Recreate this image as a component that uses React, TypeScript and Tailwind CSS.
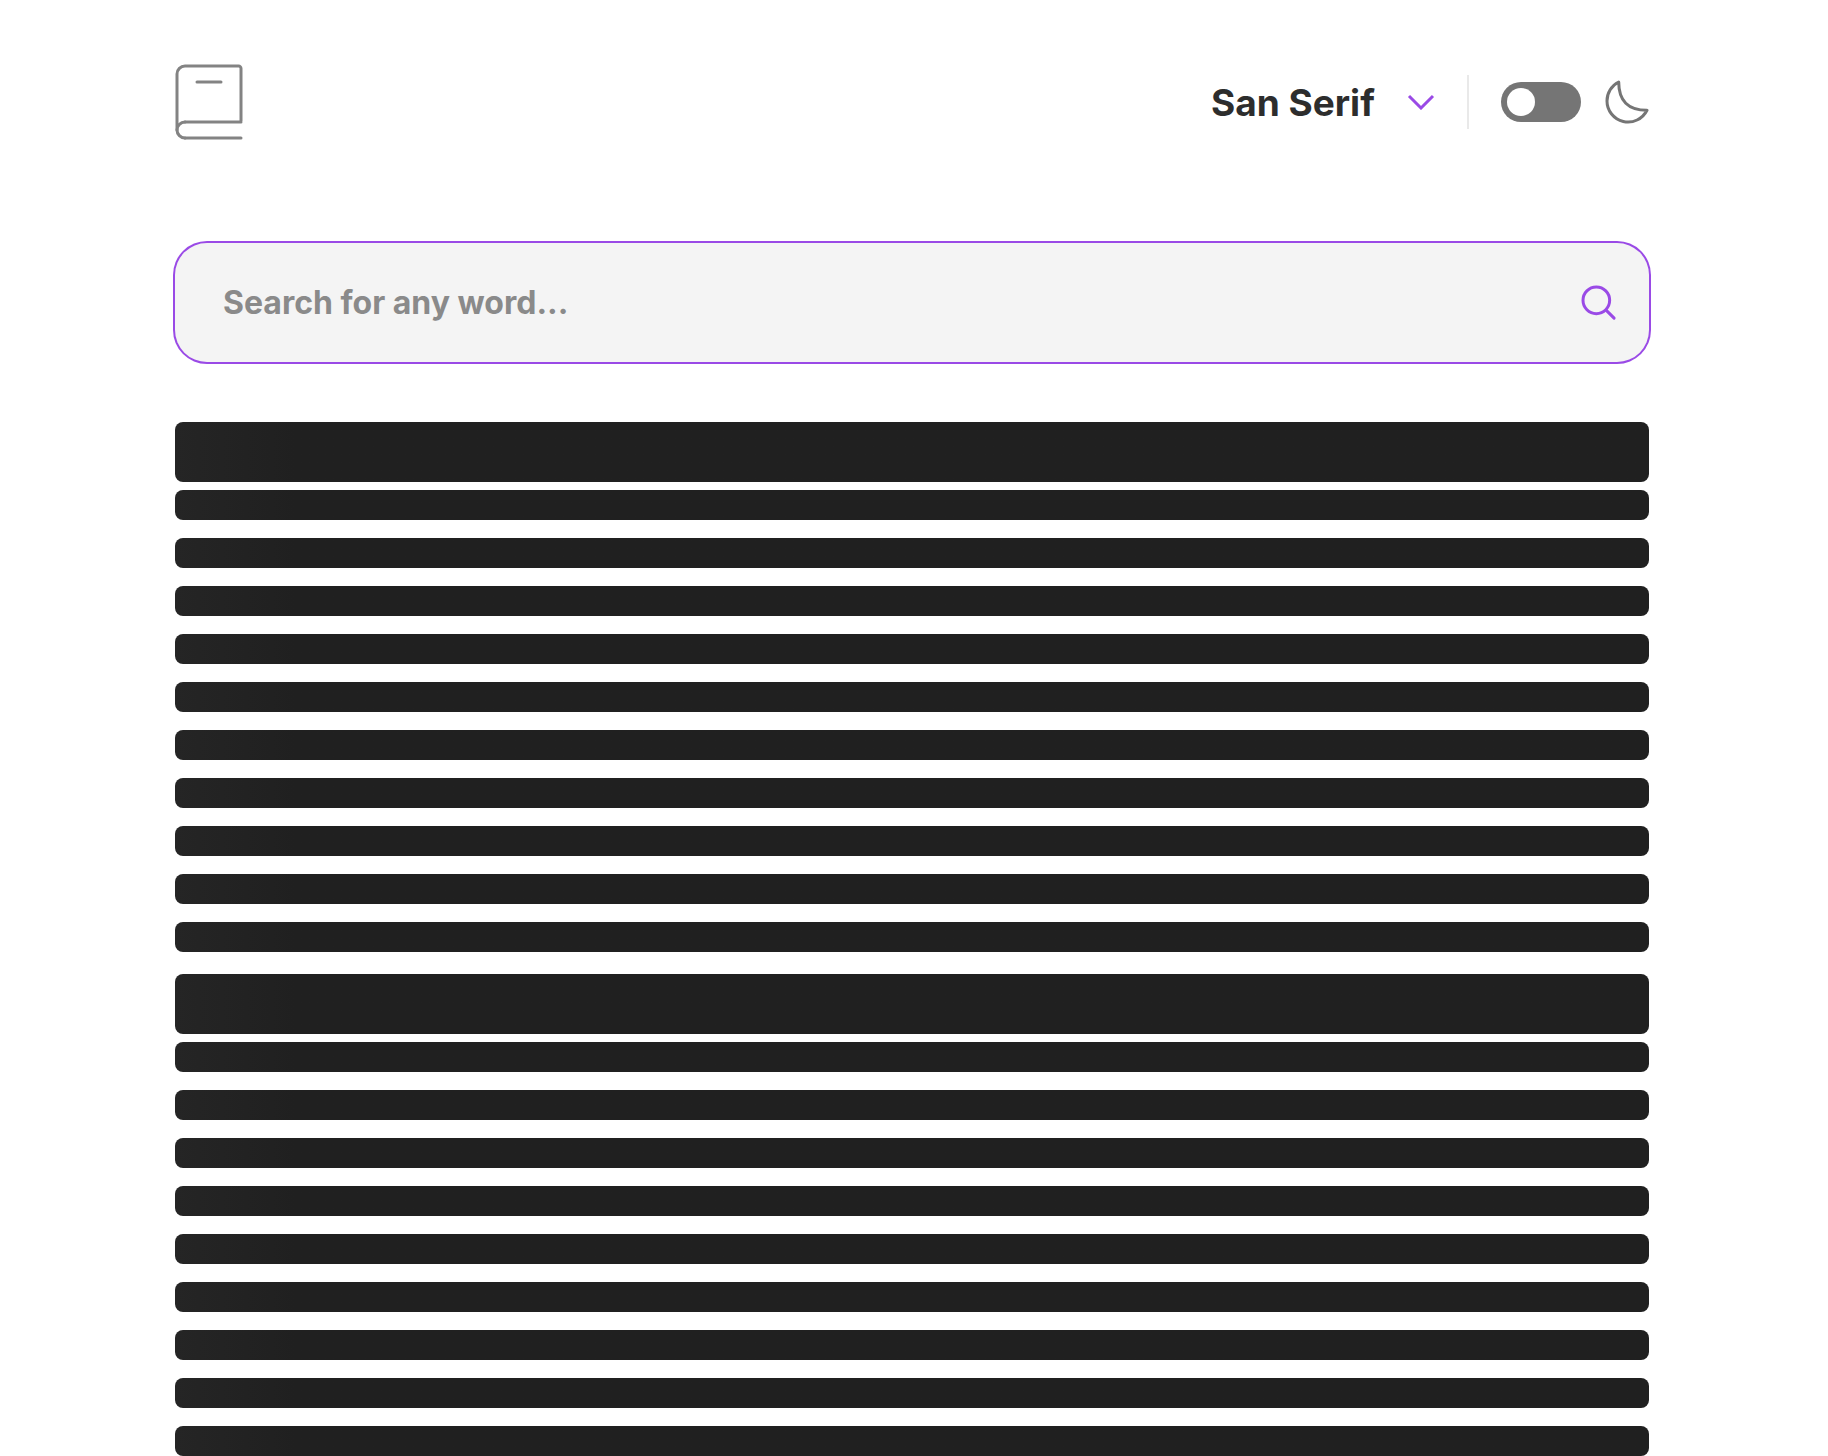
const sections = [
  { id: "first", lines: 10 },
  { id: "second", lines: 9 },
];

const barStyle = "rounded-lg bg-linear-to-r from-[#252525] to-[#202020] to-[120px]";

function BookLogo() {
  return (
    <svg className="h-[76px] w-[68px]" viewBox="0 0 34 38" fill="none" stroke="#838383" strokeWidth="1.5" strokeLinecap="round" role="img" aria-label="Dictionary">
      <path d="M1 33V5a4 4 0 0 1 4-4h26.8A1.2 1.2 0 0 1 33 2.2v26.228M5 29h28M5 37h28" />
      <path strokeLinejoin="round" d="M5 37a4 4 0 1 1 0-8" />
      <path d="M11 9h12" />
    </svg>
  );
}

function Header() {
  return (
    <header className="flex items-center justify-between">
      <BookLogo />
      <div className="flex items-center gap-8">
        <div className="relative flex items-center">
          <select
            aria-label="Font"
            defaultValue="sans"
            className="appearance-none bg-transparent pt-0.5 pr-[60px] text-[37px] leading-[54px] font-bold text-[#2d2d2d] outline-none"
          >
            <option value="sans">San Serif</option>
            <option value="serif">Serif</option>
            <option value="mono">Mono</option>
          </select>
          <svg className="pointer-events-none absolute right-0 h-4 w-7" viewBox="0 0 14 8" fill="none" stroke="#9A4AE6" strokeWidth="1.5" aria-hidden="true">
            <path d="m1 1 6 6 6-6" />
          </svg>
        </div>
        <div className="h-[54px] w-0.5 bg-[#e9e9e9]" />
        <label className="flex items-center gap-6">
          <input
            type="checkbox"
            role="switch"
            aria-label="Dark mode"
            className="flex h-10 w-20 appearance-none items-center rounded-full bg-[#757575] px-1.5 before:size-7 before:rounded-full before:bg-white before:content-[''] checked:justify-end checked:bg-[#9a4ae6]"
          />
          <svg className="size-11" viewBox="0 0 22 22" fill="none" stroke="#757575" strokeWidth="1.5" strokeLinecap="round" strokeLinejoin="round" aria-hidden="true">
            <path d="M1 10.449a10.544 10.544 0 0 0 19.993 4.686C11.544 15.135 6.858 10.448 6.858 1A10.545 10.545 0 0 0 1 10.449Z" />
          </svg>
        </label>
      </div>
    </header>
  );
}

function SearchForm() {
  return (
    <form
      className="mt-[103px] flex h-[119px] items-center rounded-[32px] bg-[#f4f4f4] pr-8 pl-12 ring-2 ring-[#9a4ae6]"
      onSubmit={(event) => event.preventDefault()}
    >
      <input
        type="text"
        aria-label="Search for any word"
        placeholder="Search for any word..."
        className="min-w-0 flex-1 bg-transparent text-[32px] leading-[48px] font-bold text-[#2d2d2d] outline-none placeholder:text-[#8a8a8a]"
      />
      <button type="submit" aria-label="Search">
        <svg className="size-9" viewBox="0 0 18 18" fill="none" stroke="#9A4AE6" strokeWidth="1.5" strokeLinecap="round" strokeLinejoin="round" aria-hidden="true">
          <circle cx="7.664" cy="7.664" r="6.664" />
          <path d="m12.663 12.663 3.887 3.887" />
        </svg>
      </button>
    </form>
  );
}

function Skeleton() {
  return (
    <div className="mt-[60px] flex flex-col gap-[22px]" role="status" aria-label="Loading">
      {sections.map((section) => (
        <div key={section.id} className="flex flex-col gap-2">
          <div className={`h-[60px] ${barStyle}`} />
          <div className="flex flex-col gap-[18px]">
            {Array.from({ length: section.lines }, (_, line) => (
              <div key={line} className={`h-[30px] ${barStyle}`} />
            ))}
          </div>
        </div>
      ))}
    </div>
  );
}

export default function App() {
  return (
    <div className="min-h-screen bg-white pr-1 font-['Inter',sans-serif]">
      <main className="mx-auto w-full max-w-[1474px] pt-16">
        <Header />
        <SearchForm />
        <Skeleton />
      </main>
    </div>
  );
}
